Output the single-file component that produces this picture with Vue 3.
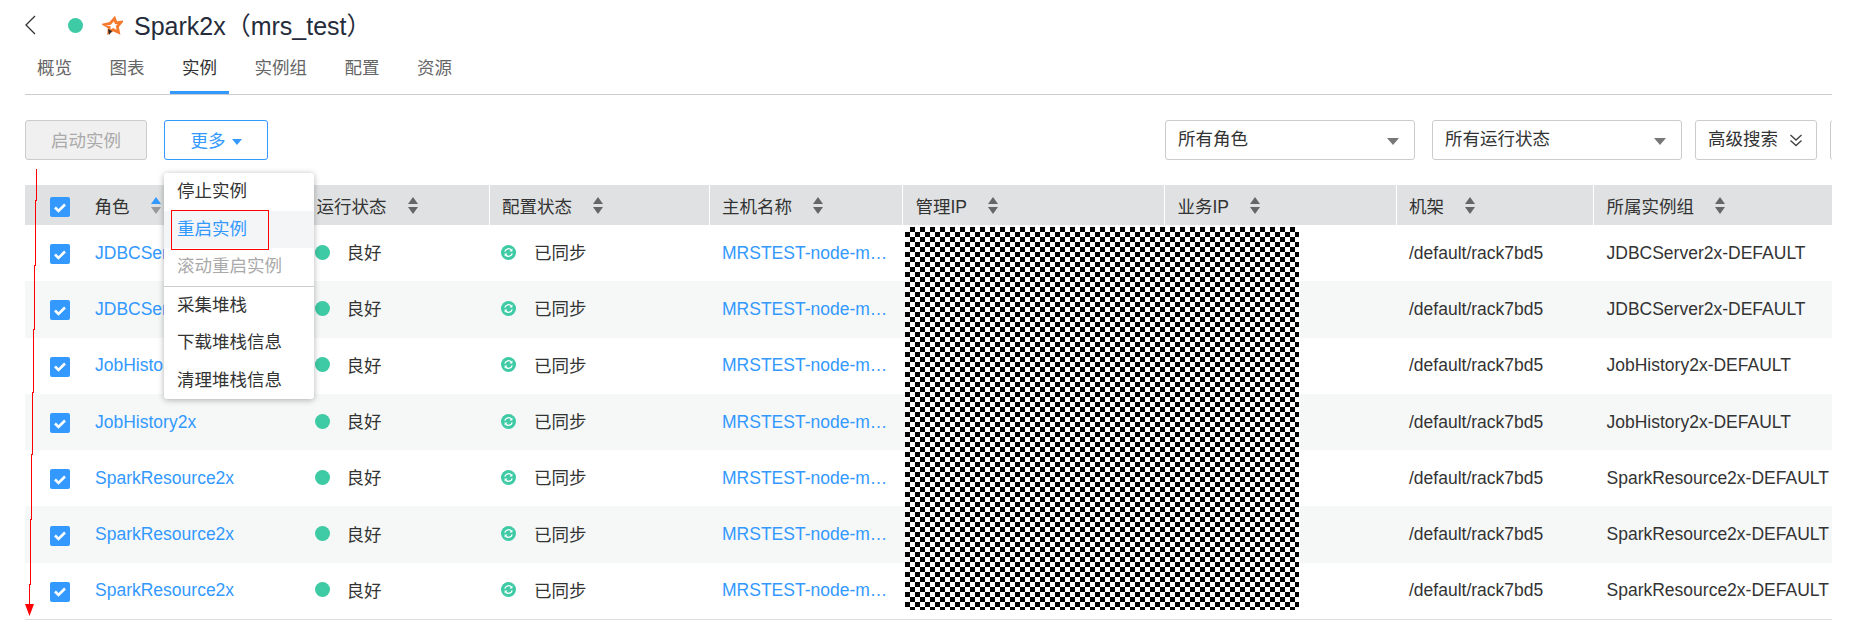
<script setup>
const tabs = ['概览', '图表', '实例', '实例组', '配置', '资源']
const cols = [
  { label: '运行状态', w: 185.5 },
  { label: '配置状态', w: 220 },
  { label: '主机名称', w: 193.5 },
  { label: '管理IP', w: 262 },
  { label: '业务IP', w: 231.5 },
  { label: '机架', w: 197.5 },
  { label: '所属实例组', w: 239 },
]
const rows = [
  ['JDBCServer2x', 'JDBCServer2x-DEFAULT'],
  ['JDBCServer2x', 'JDBCServer2x-DEFAULT'],
  ['JobHistory2x', 'JobHistory2x-DEFAULT'],
  ['JobHistory2x', 'JobHistory2x-DEFAULT'],
  ['SparkResource2x', 'SparkResource2x-DEFAULT'],
  ['SparkResource2x', 'SparkResource2x-DEFAULT'],
  ['SparkResource2x', 'SparkResource2x-DEFAULT'],
]
const menu = [
  { t: '停止实例' },
  { t: '重启实例', cls: 'hover' },
  { t: '滚动重启实例', cls: 'off' },
  { sep: true },
  { t: '采集堆栈' },
  { t: '下载堆栈信息' },
  { t: '清理堆栈信息' },
]
</script>

<template>
  <div class="page">
    <div class="title">
      <svg class="back" width="11" height="20" viewBox="0 0 11 20"><path d="M10 1 1 10l9 9" fill="none" stroke="#333" stroke-width="1.3" /></svg>
      <span class="dot big"></span>
      <svg class="star" width="21" height="21" viewBox="0 0 21 21">
        <path d="M12.5 3.5 14 7.8l5-.6-3.6 4.3 1.1 5.8-5.4-2.6-4.3 2.6.4-5L2.6 9.6l5.5-1.2z" fill="none" stroke="#f5792c" stroke-width="2.8" />
        <path d="M6 14 10 16l-3 4z" fill="#2b2b2b" />
      </svg>
      <h1>Spark2x（mrs_test）</h1>
    </div>
    <div class="tabs">
      <div v-for="t in tabs" :key="t" class="tab" :class="{ active: t === '实例' }">{{ t }}</div>
    </div>
    <div class="toolbar">
      <button class="btn disabled">启动实例</button>
      <button class="btn more">更多<i class="caret blue"></i></button>
      <div class="spacer"></div>
      <div class="select">所有角色<i class="caret grey"></i></div>
      <div class="select">所有运行状态<i class="caret grey"></i></div>
      <div class="adv">高级搜索
        <svg width="14" height="13" viewBox="0 0 14 13"><path d="M1.5 1 7 6l5.5-5M1.5 6.5 7 11.5l5.5-5" fill="none" stroke="#444" stroke-width="1.4" /></svg>
      </div>
      <div class="cut"></div>
    </div>
    <div class="table">
      <div class="head">
        <div class="h-check"><span class="check"><svg width="14" height="11" viewBox="0 0 14 11"><path d="M2 5.5 5.5 9 12 2.5" fill="none" stroke="#fff" stroke-width="2.6" /></svg></span></div>
        <div class="h-role">角色<span class="sort"><i class="up on"></i><i class="down pale"></i></span></div>
        <div v-for="c in cols" :key="c.label" class="h-cell" :style="{ width: c.w + 'px' }">
          {{ c.label }}<span class="sort"><i class="up"></i><i class="down"></i></span>
        </div>
      </div>
      <div v-for="(r, i) in rows" :key="i" class="row">
        <div class="h-check"><span class="check low"><svg width="14" height="11" viewBox="0 0 14 11"><path d="M2 5.5 5.5 9 12 2.5" fill="none" stroke="#fff" stroke-width="2.6" /></svg></span></div>
        <div class="c-role link">{{ r[0] }}</div>
        <div class="cell" :style="{ width: cols[0].w + 'px' }"><span class="dot"></span><span class="s-text">良好</span></div>
        <div class="cell" :style="{ width: cols[1].w + 'px' }">
          <svg class="sync" width="15" height="15" viewBox="0 0 15 15">
            <circle cx="7.5" cy="7.5" r="7.5" fill="#3dcaa4" />
            <path d="M3.8 6.6a3.8 3.8 0 0 1 6.6-1.6M11.2 8.4a3.8 3.8 0 0 1-6.6 1.6" fill="none" stroke="#fff" stroke-width="1.3" />
            <path d="M11.4 3.4v3h-3zM3.6 11.6v-3h3z" fill="#fff" />
          </svg>
          <span class="s-text">已同步</span>
        </div>
        <div class="cell" :style="{ width: cols[2].w + 'px' }"><span class="link ell">MRSTEST-node-master1</span></div>
        <div class="cell" :style="{ width: cols[3].w + 'px' }"></div>
        <div class="cell" :style="{ width: cols[4].w + 'px' }"></div>
        <div class="cell" :style="{ width: cols[5].w + 'px' }">/default/rack7bd5</div>
        <div class="cell" :style="{ width: cols[6].w + 'px' }">{{ r[1] }}</div>
      </div>
      <div class="mask"></div>
    </div>
    <div class="menu">
      <template v-for="(m, i) in menu" :key="i">
        <div v-if="m.sep" class="sep"></div>
        <div v-else class="item" :class="m.cls">{{ m.t }}</div>
      </template>
    </div>
    <div class="redbox"></div>
    <svg class="arrow" width="20" height="460" viewBox="0 0 20 460">
      <path d="M15 0V31H14V96H13V160H12V223H11V285H10V350H9V415H8V440" fill="none" stroke="#f00" stroke-width="1" shape-rendering="crispEdges" />
      <path d="M4 435H13L8.5 447z" fill="#f00" />
    </svg>
  </div>
</template>

<style>
html, body { margin: 0; background: #fff; }
</style>

<style scoped>
.page {
  position: relative;
  width: 1807px;
  height: 642px;
  padding-left: 25px;
  overflow: hidden;
  font-family: "Liberation Sans", "Noto Sans CJK SC", sans-serif;
  font-size: 17.5px;
  color: #333;
}
.title {
  height: 50px;
  display: flex;
  align-items: center;
}
.back { margin-right: 32px; }
.dot {
  width: 15px;
  height: 15px;
  border-radius: 50%;
  background: #3dcaa4;
  flex: none;
}
.star { margin-left: 19px; margin-right: 11px; }
h1 {
  margin: 0 0 2px;
  font-size: 25px;
  font-weight: 400;
  color: #252b3a;
}
.tabs {
  display: flex;
  gap: 13.5px;
  height: 44px;
  border-bottom: 1px solid #ccc;
}
.tab {
  padding: 0 12px;
  line-height: 37px;
  color: #666;
  height: 41px;
}
.tab.active {
  color: #333;
  border-bottom: 3px solid #3399ff;
}
.toolbar {
  display: flex;
  align-items: center;
  height: 40px;
  margin-top: 25px;
}
.toolbar > * { flex: none; }
.btn {
  height: 40px;
  box-sizing: border-box;
  border-radius: 3px;
  font: inherit;
  padding: 0 0 2px;
}
.disabled {
  width: 122px;
  background: #f0f0f0;
  border: 1px solid #ccc;
  color: #aaa;
}
.more {
  width: 104px;
  margin-left: 17px;
  background: #fff;
  border: 1px solid #3399ff;
  color: #3399ff;
}
.caret {
  display: inline-block;
  border-left: 5px solid transparent;
  border-right: 5px solid transparent;
  border-top: 6px solid #3399ff;
  margin-left: 6px;
  vertical-align: 2px;
}
.spacer { width: 897px; }
.select {
  position: relative;
  box-sizing: border-box;
  width: 250px;
  height: 40px;
  margin-right: 17px;
  padding-left: 12px;
  line-height: 37px;
  border: 1px solid #ccc;
  border-radius: 3px;
}
.select .caret {
  position: absolute;
  right: 15px;
  top: 17px;
  margin: 0;
  border-left-width: 6px;
  border-right-width: 6px;
  border-top: 7px solid #777;
}
.adv {
  box-sizing: border-box;
  width: 122px;
  height: 40px;
  margin-left: -4px;
  padding-left: 12px;
  line-height: 37px;
  border: 1px solid #ccc;
  border-radius: 3px;
  white-space: nowrap;
}
.adv svg { margin-left: 6px; vertical-align: -2px; }
.cut {
  width: 40px;
  height: 40px;
  box-sizing: border-box;
  margin-left: 13px;
  border: 1px solid #ccc;
  border-radius: 3px;
}
.table {
  position: relative;
  margin-top: 25px;
  width: 1807px;
  border-bottom: 1px solid #ddd;
}
.head {
  display: flex;
  height: 40px;
  background: #dfe1e2;
  align-items: center;
  color: #333;
}
.h-check {
  width: 58px;
  flex: none;
  height: 100%;
  display: flex;
  align-items: center;
  padding-left: 25px;
  box-sizing: border-box;
}
.check {
  width: 20px;
  height: 20px;
  border-radius: 2px;
  background: #3399ff;
  display: flex;
  align-items: center;
  justify-content: center;
  margin-top: 4px;
}
.check.low { margin-top: 2px; }
.h-role, .h-cell {
  flex: none;
  box-sizing: border-box;
  height: 100%;
  padding: 0 0 0 11.5px;
  display: flex;
  align-items: center;
  white-space: nowrap;
}
.h-role { width: 220px; }
.h-cell { border-left: 1px solid #fff; padding-left: 12.5px; }
.sort {
  display: flex;
  flex-direction: column;
  gap: 3px;
  margin-left: 21px;
}
.sort i {
  display: block;
  border-left: 5px solid transparent;
  border-right: 5px solid transparent;
}
.up { border-bottom: 7px solid #666; }
.down { border-top: 7px solid #666; }
.up.on { border-bottom-color: #3399ff; }
.down.pale { border-top-color: #999; }
.row {
  display: flex;
  height: 56.3px;
  align-items: center;
}
.row:nth-child(odd) { background: #f6f8f8; }
.c-role {
  width: 220px;
  flex: none;
  padding-left: 12px;
  box-sizing: border-box;
}
.link { color: #3399ff; }
.cell {
  flex: none;
  box-sizing: border-box;
  padding-left: 13.5px;
  display: flex;
  align-items: center;
  white-space: nowrap;
  overflow: hidden;
}
.ell {
  display: block;
  width: 172px;
  overflow: hidden;
  text-overflow: ellipsis;
}
.cell .dot { margin-top: -2px; margin-left: -2px; }
.sync { margin-top: -2px; margin-left: -1px; }
.s-text { margin-left: 18px; margin-top: -3px; }
.dot + .s-text { margin-left: 17px; }
.mask {
  position: absolute;
  left: 880px;
  top: 42px;
  width: 394px;
  height: 383px;
  background-color: #fff;
  background-image: conic-gradient(#000 25%, #fff 0 50%, #000 0 75%, #fff 0);
  background-size: 10px 10px;
}
.menu {
  position: absolute;
  left: 164px;
  top: 173px;
  width: 150px;
  height: 226px;
  background: #fff;
  border-radius: 3px;
  box-shadow: 0 1px 6px rgba(0, 0, 0, 0.3);
  z-index: 2;
}
.item {
  height: 37.5px;
  line-height: 36px;
  padding-left: 13px;
  color: #333;
}
.item.hover { background: #f3f5f7; color: #3399ff; }
.item.off { color: #aaa; }
.sep { height: 1px; background: #ccc; }
.redbox {
  position: absolute;
  left: 171px;
  top: 210px;
  width: 96px;
  height: 38px;
  border: 1px solid #f00;
  z-index: 3;
}
.arrow {
  position: absolute;
  left: 21px;
  top: 169px;
  z-index: 3;
}
</style>
